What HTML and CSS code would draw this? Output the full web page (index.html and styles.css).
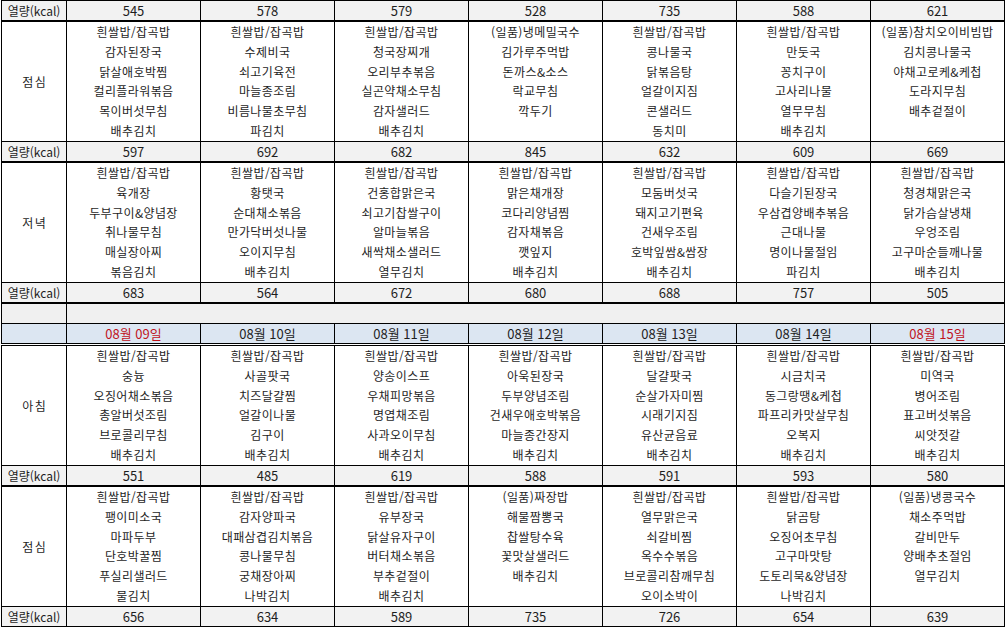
FILE: index.html
```html
<!DOCTYPE html>
<html lang="ko">
<head>
<meta charset="utf-8">
<title>식단표</title>
<link rel="stylesheet" href="styles.css">
</head>
<body>
<table class="menu">
  <colgroup>
    <col class="c-label"><col class="c-day"><col class="c-day"><col class="c-day"><col class="c-day"><col class="c-day"><col class="c-day"><col class="c-day">
  </colgroup>
  <tbody>
    <tr class="kcal sep">
      <td class="label">열량(kcal)</td><td>545</td><td>578</td><td>579</td><td>528</td><td>735</td><td>588</td><td>621</td>
    </tr>
    <tr class="meal">
      <td class="label">점심</td>
      <td><span>흰쌀밥/잡곡밥</span><span>감자된장국</span><span>닭살애호박찜</span><span>컬리플라워볶음</span><span>목이버섯무침</span><span>배추김치</span></td>
      <td><span>흰쌀밥/잡곡밥</span><span>수제비국</span><span>쇠고기육전</span><span>마늘종조림</span><span>비름나물초무침</span><span>파김치</span></td>
      <td><span>흰쌀밥/잡곡밥</span><span>청국장찌개</span><span>오리부추볶음</span><span>실곤약채소무침</span><span>감자샐러드</span><span>배추김치</span></td>
      <td><span>(일품)냉메밀국수</span><span>김가루주먹밥</span><span>돈까스&amp;소스</span><span>락교무침</span><span>깍두기</span><span></span></td>
      <td><span>흰쌀밥/잡곡밥</span><span>콩나물국</span><span>닭볶음탕</span><span>얼갈이지짐</span><span>콘샐러드</span><span>동치미</span></td>
      <td><span>흰쌀밥/잡곡밥</span><span>만둣국</span><span>꽁치구이</span><span>고사리나물</span><span>열무무침</span><span>배추김치</span></td>
      <td><span>(일품)참치오이비빔밥</span><span>김치콩나물국</span><span>야채고로케&amp;케첩</span><span>도라지무침</span><span>배추겉절이</span><span></span></td>
    </tr>
    <tr class="kcal sep">
      <td class="label">열량(kcal)</td><td>597</td><td>692</td><td>682</td><td>845</td><td>632</td><td>609</td><td>669</td>
    </tr>
    <tr class="meal">
      <td class="label">저녁</td>
      <td><span>흰쌀밥/잡곡밥</span><span>육개장</span><span>두부구이&amp;양념장</span><span>취나물무침</span><span>매실장아찌</span><span>볶음김치</span></td>
      <td><span>흰쌀밥/잡곡밥</span><span>황탯국</span><span>순대채소볶음</span><span>만가닥버섯나물</span><span>오이지무침</span><span>배추김치</span></td>
      <td><span>흰쌀밥/잡곡밥</span><span>건홍합맑은국</span><span>쇠고기찹쌀구이</span><span>알마늘볶음</span><span>새싹채소샐러드</span><span>열무김치</span></td>
      <td><span>흰쌀밥/잡곡밥</span><span>맑은채개장</span><span>코다리양념찜</span><span>감자채볶음</span><span>깻잎지</span><span>배추김치</span></td>
      <td><span>흰쌀밥/잡곡밥</span><span>모둠버섯국</span><span>돼지고기편육</span><span>건새우조림</span><span>호박잎쌈&amp;쌈장</span><span>배추김치</span></td>
      <td><span>흰쌀밥/잡곡밥</span><span>다슬기된장국</span><span>우삼겹양배추볶음</span><span>근대나물</span><span>명이나물절임</span><span>파김치</span></td>
      <td><span>흰쌀밥/잡곡밥</span><span>청경채맑은국</span><span>닭가슴살냉채</span><span>우엉조림</span><span>고구마순들깨나물</span><span>배추김치</span></td>
    </tr>
    <tr class="kcal sep">
      <td class="label">열량(kcal)</td><td>683</td><td>564</td><td>672</td><td>680</td><td>688</td><td>757</td><td>505</td>
    </tr>
    <tr class="blank">
      <td class="label"></td><td colspan="7"></td>
    </tr>
    <tr class="dates">
      <td class="label"></td>
      <td class="holiday">08월 09일</td><td>08월 10일</td><td>08월 11일</td><td>08월 12일</td><td>08월 13일</td><td>08월 14일</td><td class="holiday">08월 15일</td>
    </tr>
    <tr class="meal">
      <td class="label">아침</td>
      <td><span>흰쌀밥/잡곡밥</span><span>숭늉</span><span>오징어채소볶음</span><span>총알버섯조림</span><span>브로콜리무침</span><span>배추김치</span></td>
      <td><span>흰쌀밥/잡곡밥</span><span>사골팟국</span><span>치즈달걀찜</span><span>얼갈이나물</span><span>김구이</span><span>배추김치</span></td>
      <td><span>흰쌀밥/잡곡밥</span><span>양송이스프</span><span>우채피망볶음</span><span>명엽채조림</span><span>사과오이무침</span><span>배추김치</span></td>
      <td><span>흰쌀밥/잡곡밥</span><span>아욱된장국</span><span>두부양념조림</span><span>건새우애호박볶음</span><span>마늘종간장지</span><span>배추김치</span></td>
      <td><span>흰쌀밥/잡곡밥</span><span>달걀팟국</span><span>순살가자미찜</span><span>시래기지짐</span><span>유산균음료</span><span>배추김치</span></td>
      <td><span>흰쌀밥/잡곡밥</span><span>시금치국</span><span>동그랑땡&amp;케첩</span><span>파프리카맛살무침</span><span>오복지</span><span>배추김치</span></td>
      <td><span>흰쌀밥/잡곡밥</span><span>미역국</span><span>병어조림</span><span>표고버섯볶음</span><span>씨앗젓갈</span><span>배추김치</span></td>
    </tr>
    <tr class="kcal sep">
      <td class="label">열량(kcal)</td><td>551</td><td>485</td><td>619</td><td>588</td><td>591</td><td>593</td><td>580</td>
    </tr>
    <tr class="meal">
      <td class="label">점심</td>
      <td><span>흰쌀밥/잡곡밥</span><span>팽이미소국</span><span>마파두부</span><span>단호박꿀찜</span><span>푸실리샐러드</span><span>물김치</span></td>
      <td><span>흰쌀밥/잡곡밥</span><span>감자양파국</span><span>대패삼겹김치볶음</span><span>콩나물무침</span><span>궁채장아찌</span><span>나박김치</span></td>
      <td><span>흰쌀밥/잡곡밥</span><span>유부장국</span><span>닭살유자구이</span><span>버터채소볶음</span><span>부추겉절이</span><span>배추김치</span></td>
      <td><span>(일품)짜장밥</span><span>해물짬뽕국</span><span>찹쌀탕수육</span><span>꽃맛살샐러드</span><span>배추김치</span><span></span></td>
      <td><span>흰쌀밥/잡곡밥</span><span>열무맑은국</span><span>쇠갈비찜</span><span>옥수수볶음</span><span>브로콜리참깨무침</span><span>오이소박이</span></td>
      <td><span>흰쌀밥/잡곡밥</span><span>닭곰탕</span><span>오징어초무침</span><span>고구마맛탕</span><span>도토리묵&amp;양념장</span><span>나박김치</span></td>
      <td><span>(일품)냉콩국수</span><span>채소주먹밥</span><span>갈비만두</span><span>양배추초절임</span><span>열무김치</span><span></span></td>
    </tr>
    <tr class="kcal">
      <td class="label">열량(kcal)</td><td>656</td><td>634</td><td>589</td><td>735</td><td>726</td><td>654</td><td>639</td>
    </tr>
  </tbody>
</table>
</body>
</html>
```

FILE: styles.css
```css
html, body {
  margin: 0;
  padding: 0;
  background: #ffffff;
}

body {
  font-family: "Noto Sans CJK KR", "Noto Sans", sans-serif;
  font-size: 12px;
  color: #1e1e1e;
}

.menu {
  margin-left: 1px;
  width: 1003px;
  table-layout: fixed;
  border-collapse: collapse;
  border: 1px solid #000;
}

.c-label { width: 65px; }
.c-day { width: 134px; }

.menu td {
  padding: 0;
  border: 1px solid #000;
  text-align: center;
  vertical-align: middle;
  line-height: 19px;
  white-space: nowrap;
  overflow: hidden;
}

.kcal td {
  background: #f2f2f2;
  height: 19px;
  font-size: 13px;
}

.kcal td.label {
  font-size: 12px;
}

.sep td {
  border-bottom: 2px solid #000;
}

.meal td {
  background: #ffffff;
  letter-spacing: 0.4px;
}

.meal td.label {
  letter-spacing: 1.5px;
  padding-left: 1.5px;
}

.meal td span {
  display: block;
  height: 19.83px;
  line-height: 19.83px;
}

.blank td {
  background: #f0f0f0;
  height: 19px;
}

.dates td {
  background: #dce6f2;
  height: 19px;
  border-bottom: 3px double #000;
  font-size: 13px;
}

.dates .holiday {
  color: #c0141c;
}
```
